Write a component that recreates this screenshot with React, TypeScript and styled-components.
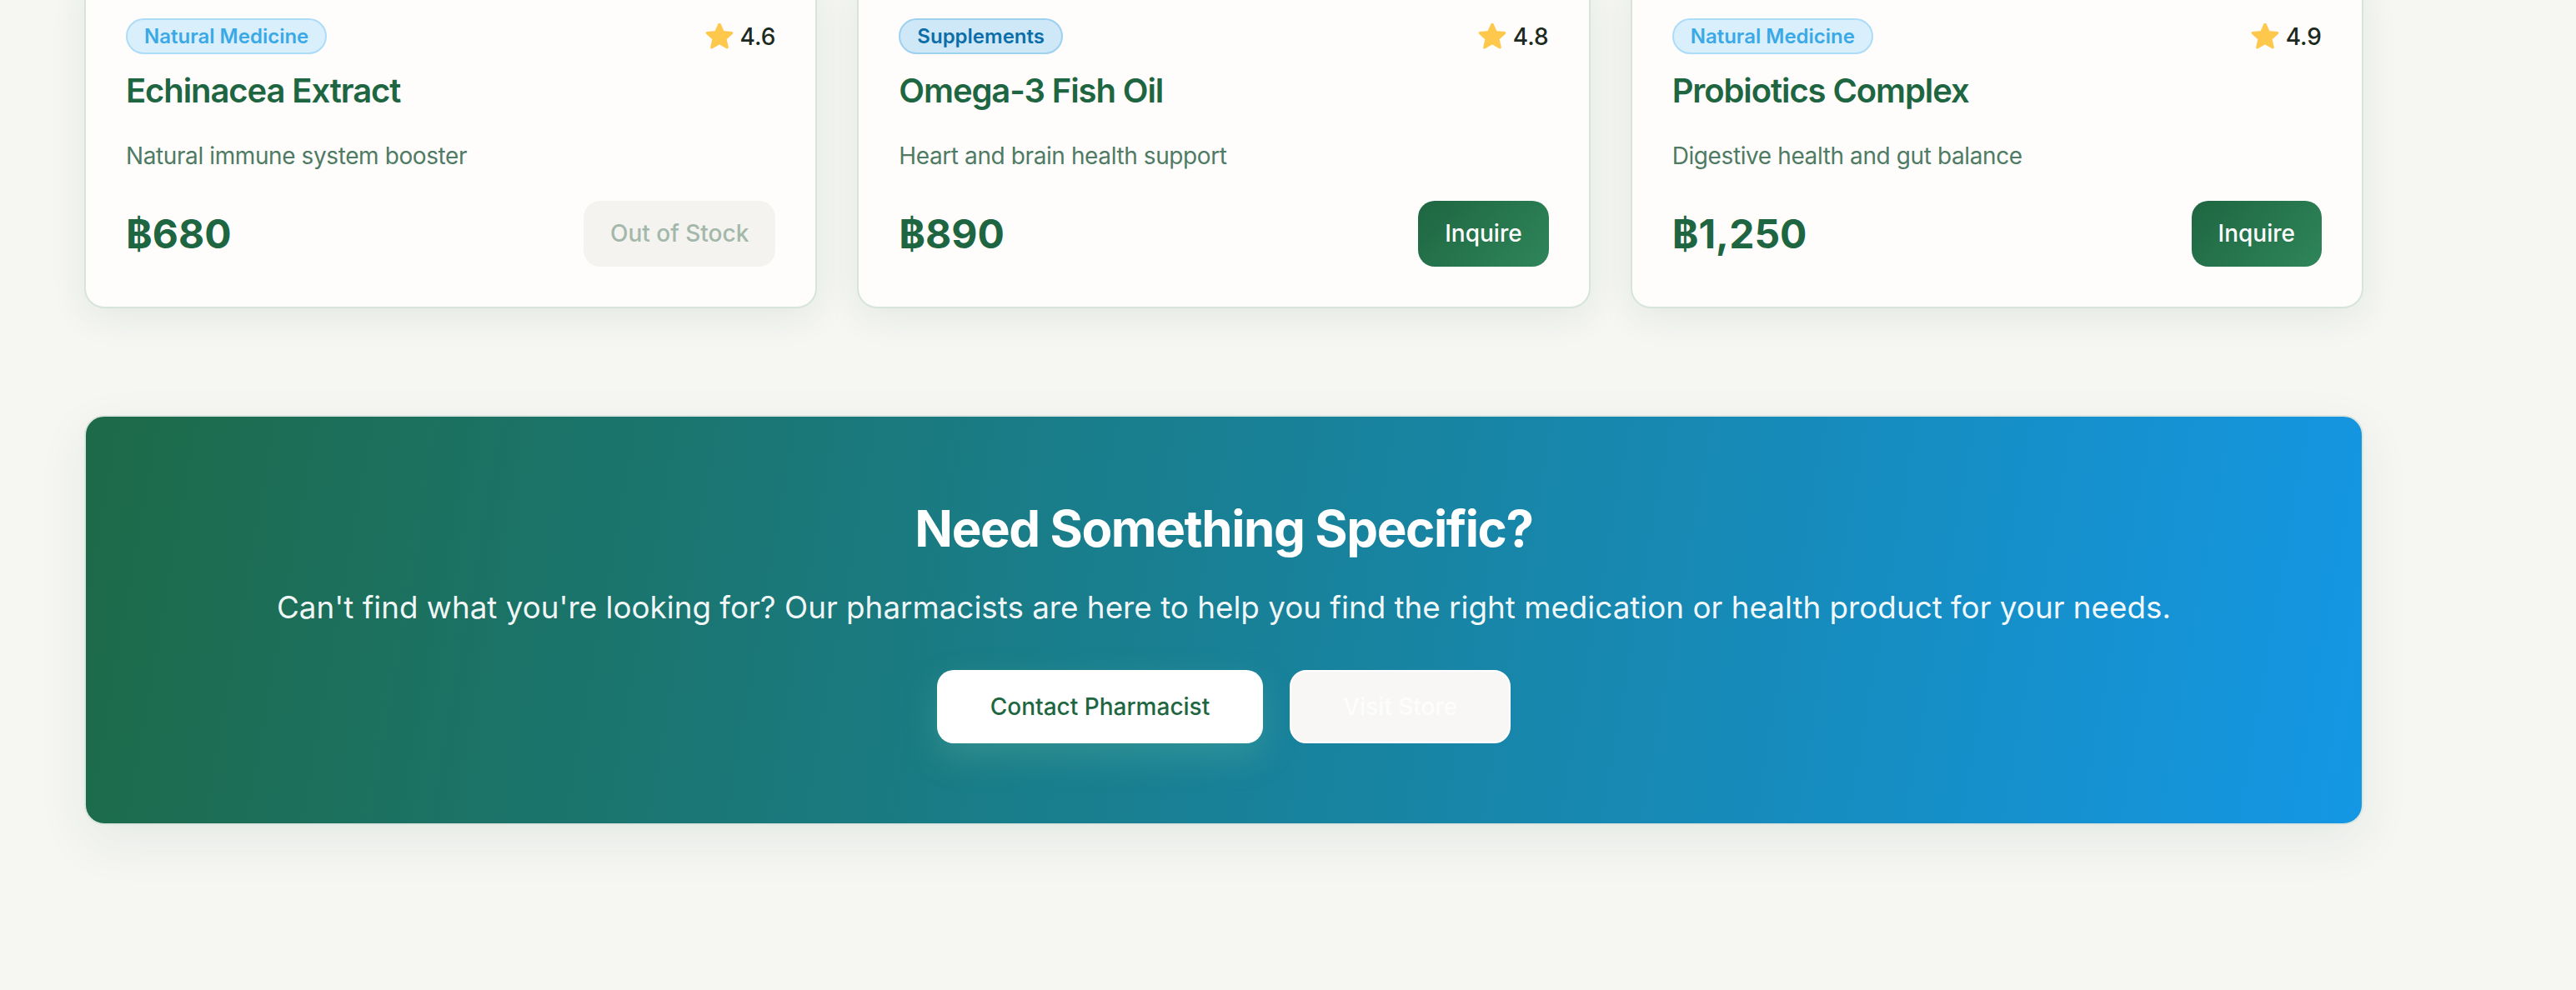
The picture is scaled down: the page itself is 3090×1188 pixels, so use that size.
import React from "react";
import styled, { createGlobalStyle } from "styled-components";

const GlobalStyle = createGlobalStyle`
  body {
    margin: 0;
    background: #f6f6f3;
    font-family: Inter, "Noto Sans", "DejaVu Sans", sans-serif;
    overflow: hidden;
  }
`;

interface Product {
  category: string;
  tone: "light" | "deep";
  rating: string;
  name: string;
  description: string;
  price: string;
  inStock: boolean;
}

const products: Product[] = [
  {
    category: "Natural Medicine",
    tone: "light",
    rating: "4.6",
    name: "Echinacea Extract",
    description: "Natural immune system booster",
    price: "฿680",
    inStock: false,
  },
  {
    category: "Supplements",
    tone: "deep",
    rating: "4.8",
    name: "Omega-3 Fish Oil",
    description: "Heart and brain health support",
    price: "฿890",
    inStock: true,
  },
  {
    category: "Natural Medicine",
    tone: "light",
    rating: "4.9",
    name: "Probiotics Complex",
    description: "Digestive health and gut balance",
    price: "฿1,250",
    inStock: true,
  },
];

const StarIcon = () => (
  <svg width="34" height="32" viewBox="1 1 22 21">
    <path
      d="M12 1.6l2.9 6.3 6.8.7-5.1 4.6 1.5 6.8L12 16.5 5.9 20l1.5-6.8-5.1-4.6 6.8-.7z"
      fill="#fec84d"
      stroke="#fec84d"
      strokeWidth="2"
      strokeLinejoin="round"
    />
  </svg>
);

export default function App() {
  return (
    <>
      <GlobalStyle />
      <Page>
        <ProductGrid>
          {products.map((p) => (
            <Card key={p.name}>
              <CardHeader>
                <Badge $tone={p.tone}>{p.category}</Badge>
                <Rating>
                  <StarIcon />
                  <span>{p.rating}</span>
                </Rating>
              </CardHeader>
              <Title>{p.name}</Title>
              <Description>{p.description}</Description>
              <CardFooter>
                <Price>{p.price}</Price>
                {p.inStock ? (
                  <InquireButton>Inquire</InquireButton>
                ) : (
                  <DisabledButton disabled>Out of Stock</DisabledButton>
                )}
              </CardFooter>
            </Card>
          ))}
        </ProductGrid>

        <Banner>
          <BannerTitle>Need Something Specific?</BannerTitle>
          <BannerText>
            Can't find what you're looking for? Our pharmacists are here to help you find the right
            medication or health product for your needs.
          </BannerText>
          <BannerActions>
            <PrimaryButton>Contact Pharmacist</PrimaryButton>
            <GhostButton>Visit Store</GhostButton>
          </BannerActions>
        </Banner>
      </Page>
    </>
  );
}

const Page = styled.div`
  width: 2734px;
  margin-left: 101px;
  padding-bottom: 200px;
`;

const ProductGrid = styled.div`
  display: grid;
  grid-template-columns: repeat(3, 1fr);
  gap: 48px;
  margin-top: -28px;
`;

const Card = styled.div`
  background: #fefdfc;
  border: 2px solid #d6e4db;
  border-radius: 24px;
  padding: 48px;
  box-shadow: 0 10px 44px rgba(30, 102, 65, 0.09);
`;

const CardHeader = styled.div`
  display: flex;
  justify-content: space-between;
  align-items: center;
  height: 43px;
  margin-bottom: 14px;
`;

const Badge = styled.span<{ $tone: "light" | "deep" }>`
  display: inline-block;
  padding: 4px 20px;
  line-height: 31px;
  font-size: 24px;
  font-weight: 600;
  border-radius: 999px;
  border: 2px solid ${(p) => (p.$tone === "deep" ? "#9dd1f0" : "#acdcf7")};
  background: ${(p) => (p.$tone === "deep" ? "#cfe8f7" : "#d9effc")};
  color: ${(p) => (p.$tone === "deep" ? "#0b6ea8" : "#3aa9e6")};
`;

const Rating = styled.div`
  display: flex;
  align-items: center;
  gap: 8px;
  font-size: 28px;
  font-weight: 500;
  color: #1c2a22;
`;

const Title = styled.h3`
  margin: 0 0 26px;
  font-size: 40px;
  line-height: 1.5;
  font-weight: 600;
  letter-spacing: -1.1px;
  color: #1e6641;
`;

const Description = styled.p`
  margin: 0 0 31px;
  font-size: 28px;
  line-height: 1.6;
  letter-spacing: -0.4px;
  color: #4f7a63;
`;

const CardFooter = styled.div`
  display: flex;
  justify-content: space-between;
  align-items: center;
`;

const Price = styled.span`
  font-size: 48px;
  line-height: 1.2;
  font-weight: 700;
  color: #1e6641;
`;

const BaseButton = styled.button`
  height: 79px;
  padding: 0 32px;
  border: none;
  border-radius: 20px;
  font-family: inherit;
  font-size: 28px;
  font-weight: 500;
`;

const InquireButton = styled(BaseButton)`
  background: linear-gradient(135deg, #1e6641, #2f855a);
  color: #fff;
`;

const DisabledButton = styled(BaseButton)`
  background: #f4f3ef;
  color: #a3b8ab;
`;

const Banner = styled.section`
  margin-top: 128px;
  border: 2px solid #dce5df;
  border-radius: 24px;
  padding: 98px 64px 96px;
  background: linear-gradient(100deg, #1d6a48 0%, #1497e4 100%);
  text-align: center;
  color: #fff;
  box-shadow: 0 20px 60px rgba(30, 102, 65, 0.08);
`;

const BannerTitle = styled.h2`
  margin: 0 0 30px;
  font-size: 60px;
  line-height: 1.2;
  font-weight: 700;
  letter-spacing: -1.4px;
`;

const BannerText = styled.p`
  margin: 0 0 45px;
  font-size: 36.8px;
  line-height: 1.6;
  color: rgba(255, 255, 255, 0.95);
`;

const BannerActions = styled.div`
  display: flex;
  justify-content: center;
  gap: 32px;
`;

const PrimaryButton = styled.button`
  height: 88px;
  padding: 0 64px;
  border: none;
  border-radius: 20px;
  background: #fff;
  color: #1e6641;
  font-family: inherit;
  font-size: 28px;
  font-weight: 500;
  box-shadow: 0 16px 40px rgba(120, 200, 160, 0.25);
`;

const GhostButton = styled.button`
  height: 88px;
  padding: 0 62px;
  border: 2px solid #fff;
  border-radius: 20px;
  background: #f8f7f5;
  color: #fdfdfd;
  font-family: inherit;
  font-size: 28px;
  font-weight: 500;
`;
